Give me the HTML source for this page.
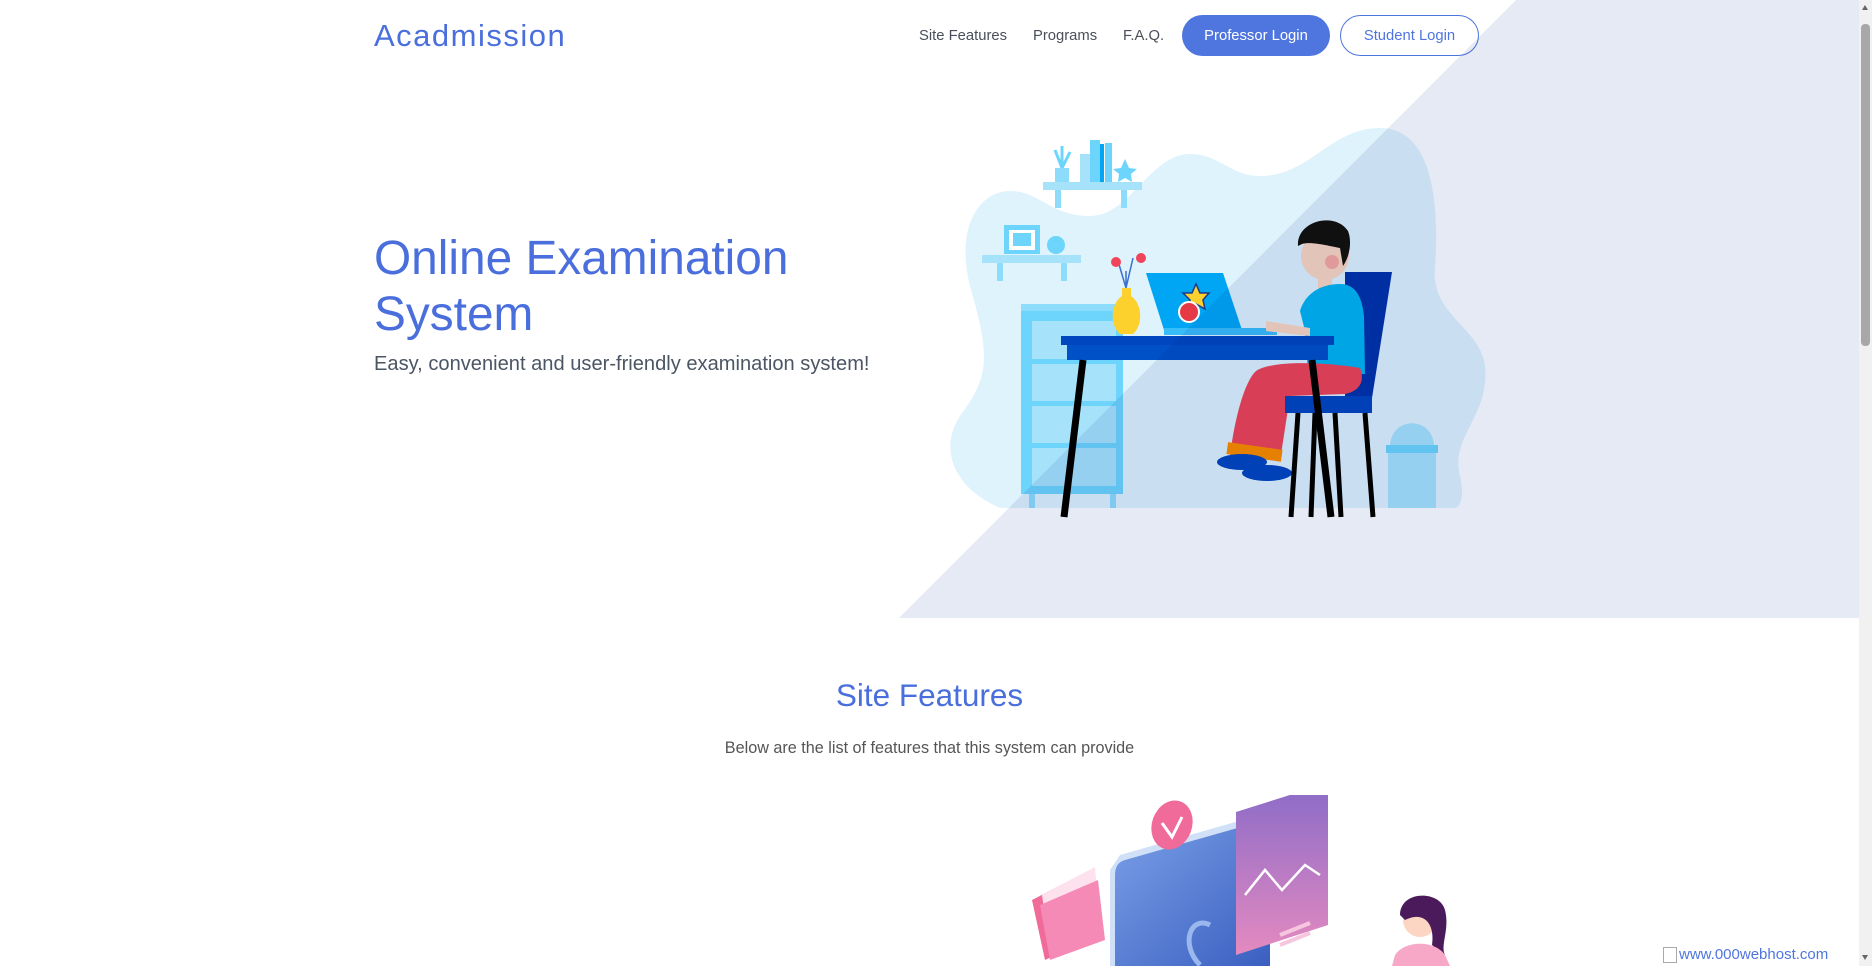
<!DOCTYPE html>
<html><head><meta charset="utf-8"><style>
*{margin:0;padding:0;box-sizing:border-box}
html,body{width:1872px;height:966px;overflow:hidden;background:#fff;font-family:"Liberation Sans",Arial,sans-serif}
.abs{position:absolute}
.logo{left:374px;top:18px;font-size:31px;color:#4a6fdc;letter-spacing:1.5px}
.nav{top:28px;font-size:14.8px;color:#4a4f5a}
.btn{top:15px;height:41px;border-radius:21px;font-size:14.8px;display:flex;align-items:center;justify-content:center}
h1{position:absolute;left:374px;top:231px;font-size:47.8px;font-weight:normal;color:#4a6fdc;line-height:56px}
.sub{left:374px;top:353px;font-size:20.1px;color:#4b5563}
.sf{left:0;width:1859px;text-align:center;top:677px;font-size:31.5px;color:#4a6fdc}
.desc{left:0;width:1859px;text-align:center;top:739px;font-size:16.2px;color:#555}
</style></head><body>
<div class="abs logo">Acadmission</div>
<div class="abs nav" style="left:919px">Site Features</div>
<div class="abs nav" style="left:1033px">Programs</div>
<div class="abs nav" style="left:1123px">F.A.Q.</div>
<div class="abs btn" style="left:1182px;width:148px;background:#4f75de;color:#fff">Professor Login</div>
<div class="abs btn" style="left:1340px;width:139px;border:1.5px solid #4f75de;color:#4f75de;background:#fff">Student Login</div>
<h1>Online Examination<br>System</h1>
<div class="abs sub">Easy, convenient and user-friendly examination system!</div>

<svg class="abs" style="left:940px;top:116px" width="560" height="420" viewBox="0 0 560 420">
<path d="M60,392 C10,370 0,330 20,300 C50,260 50,240 30,170 C15,110 40,75 70,75 C100,75 110,100 150,100 C190,100 210,38 250,38 C280,38 290,60 320,60 C370,60 390,12 440,12 C490,12 500,80 495,150 C490,200 540,210 545,250 C550,300 510,320 520,360 C525,380 520,392 515,392 Z" fill="#dff3fc"/>
<rect x="103" y="66" width="99" height="8" fill="#a6e3fb"/><rect x="115" y="74" width="6" height="18" fill="#8edcfb"/><rect x="181" y="74" width="6" height="18" fill="#8edcfb"/>
<rect x="115" y="52" width="14" height="14" fill="#8edcfb"/><path d="M122,52 L115,34 M122,52 L122,30 M122,52 L130,36" stroke="#6dd5fb" stroke-width="3"/>
<rect x="140" y="38" width="10" height="28" fill="#a6e3fb"/><rect x="150" y="24" width="10" height="42" fill="#6dd5fb"/><rect x="160" y="28" width="4" height="38" fill="#00a6f4"/><rect x="165" y="27" width="7" height="39" fill="#6dd5fb"/>
<polygon points="185,43 189,52 197,53 191,58 192,66 185,62 178,66 179,58 173,53 181,52" fill="#6dd5fb"/>
<rect x="42" y="139" width="99" height="8" fill="#a6e3fb"/><rect x="57" y="147" width="6" height="18" fill="#8edcfb"/><rect x="121" y="147" width="6" height="18" fill="#8edcfb"/>
<rect x="64" y="109" width="36" height="29" fill="#6dd5fb"/><rect x="69" y="114" width="26" height="20" fill="#fff"/><rect x="73" y="117" width="18" height="13" fill="#6dd5fb"/>
<circle cx="116" cy="129" r="9" fill="#6dd5fb"/>
<rect x="81" y="188" width="102" height="190" fill="#6dd5fb"/><rect x="81" y="188" width="102" height="7" fill="#8edcfb"/>
<rect x="92" y="205" width="84" height="38" fill="#a6e3fb"/><rect x="92" y="248" width="84" height="37" fill="#a6e3fb"/><rect x="92" y="290" width="84" height="37" fill="#a6e3fb"/><rect x="92" y="332" width="84" height="38" fill="#a6e3fb"/>
<rect x="89" y="378" width="6" height="14" fill="#8edcfb"/><rect x="170" y="378" width="6" height="14" fill="#8edcfb"/>
<path d="M186,172 L178,145 M186,172 L193,142 M186,172 L186,155" stroke="#3a70d0" stroke-width="1.5"/>
<circle cx="176" cy="146" r="5" fill="#f0445a"/><circle cx="201" cy="142" r="5" fill="#f0445a"/>
<path d="M182,172 L191,172 L191,180 C203,188 203,210 193,218 L180,218 C170,210 170,188 182,180 Z" fill="#fcd12e"/>
<polygon points="206,157 283,157 302,214 224,214" fill="#00a6f4"/><rect x="224" y="212" width="113" height="7" fill="#38bdf8"/>
<polygon points="256,168 260,177 269,177 263,184 265,193 256,188 248,193 250,184 243,177 252,177" fill="#fcd12e" stroke="#1e3a8a" stroke-width="1.5"/>
<circle cx="249" cy="196" r="10" fill="#e63946" stroke="#fff" stroke-width="2"/>
<polygon points="405,156 452,156 432,282 405,282" fill="#0033aa"/>
<circle cx="385" cy="140" r="24" fill="#fcd6c2"/>
<path d="M358,130 C356,105 395,95 408,115 C412,125 410,140 403,150 L400,132 C390,130 370,125 362,128 Z" fill="#111"/>
<circle cx="392" cy="146" r="7" fill="#f9a8a0"/>
<rect x="378" y="160" width="14" height="16" fill="#fcd6c2"/>
<path d="M360,195 C365,178 380,168 400,168 C415,168 422,180 424,200 L425,258 L368,258 L365,215 Z" fill="#00b4f0"/>
<path d="M326,205 L370,212 L370,220 L326,215 Z" fill="#fcd6c2"/>
<path d="M316,255 C330,245 380,245 420,252 C425,265 420,275 405,278 L350,280 L340,345 L290,340 C295,300 305,265 316,255 Z" fill="#f0445a"/>
<rect x="287" y="330" width="55" height="12" fill="#ff8c00" transform="rotate(8 315 336)"/>
<ellipse cx="302" cy="346" rx="25" ry="8" fill="#0047bf"/><ellipse cx="327" cy="357" rx="25" ry="8" fill="#0047bf"/>
<rect x="345" y="280" width="87" height="17" fill="#0047bf"/>
<path d="M358,297 L351,401 M375,297 L371,401 M395,297 L401,401 M425,297 L433,401" stroke="#000" stroke-width="5"/>
<rect x="121" y="220" width="273" height="9" fill="#0047bf"/><rect x="127" y="229" width="261" height="15" fill="#0050c8"/>
<path d="M143,244 L124,401 M372,244 L391,401" stroke="#000" stroke-width="7"/>
<rect x="448" y="335" width="48" height="57" fill="#a6e3fb"/><rect x="446" y="329" width="52" height="8" fill="#6dd5fb"/><path d="M450,329 C452,300 492,300 494,329 Z" fill="#a6e3fb"/>
</svg>
<svg class="abs" style="left:0;top:0;mix-blend-mode:multiply" width="1859" height="620"><polygon points="1516,0 1859,0 1859,618 899,618" fill="#e6eaf4"/></svg>

<div class="abs sf">Site Features</div>
<div class="abs desc">Below are the list of features that this system can provide</div>

<svg class="abs" style="left:1020px;top:795px" width="440" height="171" viewBox="0 0 440 171">
<defs><linearGradient id="g1" x1="0" y1="0" x2="1" y2="1"><stop offset="0" stop-color="#7aa0e8"/><stop offset="1" stop-color="#3a5fc0"/></linearGradient>
<linearGradient id="g2" x1="0" y1="0" x2="0" y2="1"><stop offset="0" stop-color="#8a6bc8"/><stop offset="1" stop-color="#e48ac0"/></linearGradient></defs>
<path d="M100,60 L240,20 L250,30 L250,171 L90,171 L90,75 Z" fill="#cfe0f7"/>
<path d="M105,65 L235,28 C245,26 250,32 250,40 L250,171 L95,171 L95,80 C95,72 98,67 105,65 Z" fill="url(#g1)"/>
<path d="M180,170 C160,150 170,120 190,130" stroke="#9ab8ee" stroke-width="5" fill="none"/>
<path d="M216,17 L308,-12 L308,130 L216,160 Z" fill="url(#g2)"/>
<path d="M225,100 L245,75 L262,95 L285,70 L300,80" stroke="#fff" stroke-width="2.5" fill="none"/>
<ellipse cx="152" cy="30" rx="20" ry="25" fill="#f06a9a" transform="rotate(20 152 30)"/>
<path d="M142,28 L152,42 L162,22" stroke="#fff" stroke-width="3" fill="none"/>
<path d="M12,105 L70,75 L80,140 L25,165 Z" fill="#f06a9a"/>
<path d="M22,100 L75,72 L80,130 L30,155 Z" fill="#fde2ee"/>
<path d="M20,110 L78,85 L85,145 L30,165 Z" fill="#f48ab5"/>
<path d="M260,140 L290,128 M260,150 L290,138" stroke="#f6c6de" stroke-width="4"/>
<circle cx="400" cy="125" r="17" fill="#fcd6c2"/>
<path d="M380,120 C380,95 420,95 425,115 C430,135 420,150 425,160 L412,150 C415,130 405,115 385,125 Z" fill="#4b1a5a"/>
<path d="M375,160 C385,145 415,145 425,160 L430,171 L372,171 Z" fill="#f7a8c6"/>
</svg>

<div class="abs" style="left:1663px;top:947px;font-size:15px;color:#4f75de;line-height:16px"><span style="display:inline-block;width:14px;height:16px;border:1px solid #aaa;vertical-align:top;margin-right:2px"></span>www.000webhost.com</div>

<div class="abs" style="left:1859px;top:0;width:13px;height:966px;background:#f1f1f1"></div>
<div class="abs" style="left:1861px;top:24px;width:9px;height:322px;background:#a8a8a8;border-radius:4px"></div>
<div class="abs" style="left:1862px;top:5px;width:0;height:0;border-left:3.5px solid transparent;border-right:3.5px solid transparent;border-bottom:5px solid #666"></div>
<div class="abs" style="left:1862px;top:955px;width:0;height:0;border-left:3.5px solid transparent;border-right:3.5px solid transparent;border-top:5px solid #666"></div>
</body></html>
